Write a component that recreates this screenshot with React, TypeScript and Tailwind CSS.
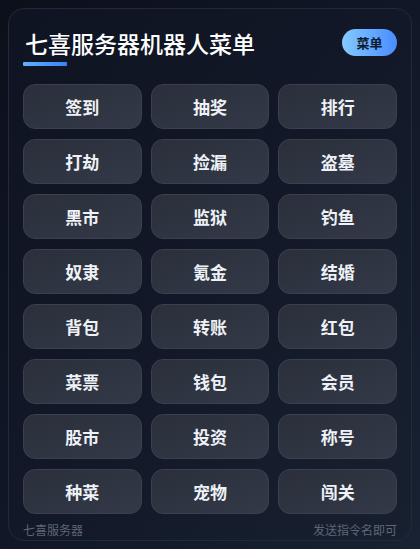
const MENU_ITEMS = [
  '签到', '抽奖', '排行',
  '打劫', '捡漏', '盗墓',
  '黑市', '监狱', '钓鱼',
  '奴隶', '氪金', '结婚',
  '背包', '转账', '红包',
  '菜票', '钱包', '会员',
  '股市', '投资', '称号',
  '种菜', '宠物', '闯关',
] as const

const FONT = { fontFamily: '"Noto Sans CJK SC", "Noto Sans", sans-serif' }

function MenuButton({ label }: { label: string }) {
  return (
    <div className="flex h-[45px] items-center justify-center rounded-[12px] border border-[#3a404d] bg-gradient-to-br from-[#2a2f3b] to-[#333947] text-[17px] font-bold text-[#eef1f6]">
      {label}
    </div>
  )
}

export default function App() {
  return (
    <div
      className="flex h-[549px] w-[420px] bg-gradient-to-br from-[#0c101b] via-[#111726] to-[#182233] p-2"
      style={FONT}
    >
      <div className="flex w-full flex-col rounded-[16px] border border-[#1e2b3c] bg-gradient-to-br from-[#0f1422] via-[#121827] to-[#18202f] px-[14px] pt-[19px]">
        <div className="flex items-start justify-between">
          <div className="flex flex-col">
            <h1 className="pl-[2px] text-[23px] font-medium leading-[30px] text-white">七喜服务器机器人菜单</h1>
            <div className="mt-[4px] h-[4px] w-[44px] rounded-[1px] bg-gradient-to-r from-[#5fb0ff] to-[#3b82f6]" />
          </div>
          <div className="mt-[1px] flex h-[27px] w-[55px] items-center justify-center rounded-full bg-gradient-to-r from-[#85caff] to-[#4a8bff] text-[13px] font-bold text-[#0d1b2e]">
            菜单
          </div>
        </div>
        <div className="mt-[18px] grid grid-cols-3 gap-x-[9px] gap-y-[10px]">
          {MENU_ITEMS.map((item) => (
            <MenuButton key={item} label={item} />
          ))}
        </div>
        <div className="mt-[8px] flex items-center justify-between text-[12px] leading-[16px] text-[#5d6678]">
          <span>七喜服务器</span>
          <span>发送指令名即可</span>
        </div>
      </div>
    </div>
  )
}
